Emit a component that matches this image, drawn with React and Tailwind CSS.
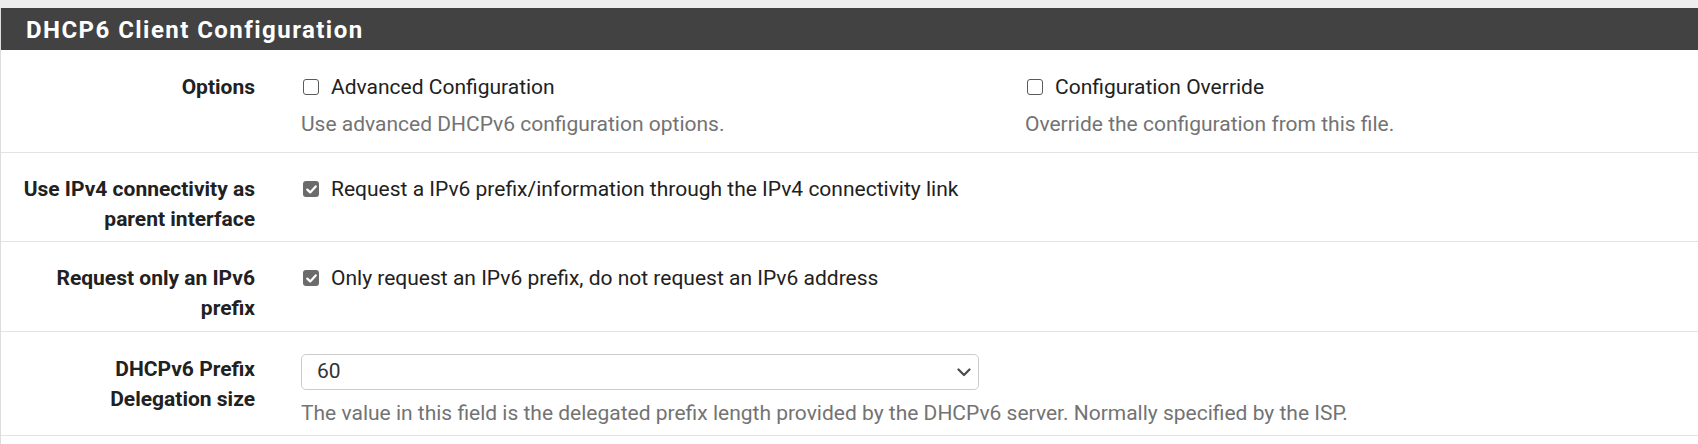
import React from "react";

function Box({ checked }) {
  if (checked) {
    return (
      <span className="ml-[2px] mr-[12px] flex h-[16px] w-[16px] shrink-0 items-center justify-center rounded-[3px] bg-[#6b6b6b]">
        <svg width="11" height="9" viewBox="0 0 11 9" fill="none">
          <path d="M1.3 4.6 L4.2 7.4 L9.7 1.4" stroke="#ffffff" strokeWidth="2.2" strokeLinecap="round" strokeLinejoin="round" />
        </svg>
      </span>
    );
  }
  return (
    <span className="ml-[2px] mr-[12px] block h-[16px] w-[16px] shrink-0 rounded-[3px] border-[1.5px] border-[#5a5a5a] bg-white" />
  );
}

function Label({ children }) {
  return (
    <div className="w-[254px] shrink-0 pl-[8px] text-right text-[21px] font-bold leading-[30px] text-[#212121]">
      {children}
    </div>
  );
}

function CheckLine({ checked, children }) {
  return (
    <div className="flex h-[30px] items-center text-[21px] leading-[30px] text-[#212121]">
      <Box checked={checked} />
      <span>{children}</span>
    </div>
  );
}

function Help({ children, className = "" }) {
  return (
    <div className={"whitespace-nowrap text-[21px] leading-[30px] text-[#737373] " + className}>
      {children}
    </div>
  );
}

export default function App() {
  return (
    <div className="flex h-[444px] w-[1698px] flex-col overflow-hidden bg-[#eeeeee] pt-[8px] font-['Roboto','Liberation_Sans',sans-serif]">
      <div className="flex-1 border-l border-[#dddddd] bg-white">
        <div className="flex h-[42px] items-center bg-[#424242] pl-[25px] pt-[2px]">
          <h2 className="text-[24px] font-bold leading-[28px] tracking-[1.45px] text-white">DHCP6 Client Configuration</h2>
        </div>

        <div className="flex h-[103px] border-b border-[#e3e3e3] pt-[22px]">
          <Label>Options</Label>
          <div className="ml-[46px] flex">
            <div className="w-[724px]">
              <CheckLine checked={false}>Advanced Configuration</CheckLine>
              <Help className="mt-[7px]">Use advanced DHCPv6 configuration options.</Help>
            </div>
            <div>
              <CheckLine checked={false}>Configuration Override</CheckLine>
              <Help className="mt-[7px]">Override the configuration from this file.</Help>
            </div>
          </div>
        </div>

        <div className="flex h-[89px] border-b border-[#e3e3e3] pt-[21px]">
          <Label>Use IPv4 connectivity as parent interface</Label>
          <div className="ml-[46px]">
            <CheckLine checked={true}>Request a IPv6 prefix/information through the IPv4 connectivity link</CheckLine>
          </div>
        </div>

        <div className="flex h-[90px] border-b border-[#e3e3e3] pt-[21px]">
          <Label>Request only an IPv6 prefix</Label>
          <div className="ml-[46px]">
            <CheckLine checked={true}>Only request an IPv6 prefix, do not request an IPv6 address</CheckLine>
          </div>
        </div>

        <div className="flex h-[104px] border-b border-[#e3e3e3] pt-[22px]">
          <Label>DHCPv6 Prefix Delegation size</Label>
          <div className="ml-[46px]">
            <div className="flex h-[36px] w-[678px] items-center justify-between rounded-[5px] border border-[#cccccc] bg-white pl-[15px] pr-[7px] text-[21px] text-[#333333]">
              <span>60</span>
              <svg width="14" height="9" viewBox="0 0 14 9" fill="none">
                <path d="M1.5 1.5 L7 7 L12.5 1.5" stroke="#4a4a4a" strokeWidth="2.2" strokeLinecap="round" strokeLinejoin="round" />
              </svg>
            </div>
            <Help className="mt-[8px]">The value in this field is the delegated prefix length provided by the DHCPv6 server. Normally specified by the ISP.</Help>
          </div>
        </div>
      </div>
    </div>
  );
}
